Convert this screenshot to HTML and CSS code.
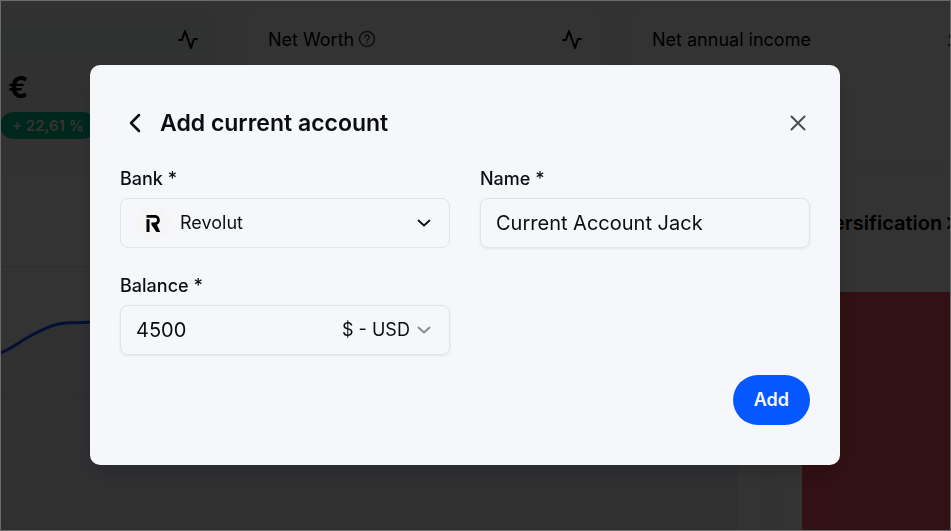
FILE: index.html
```
<!DOCTYPE html>
<html lang="en">
<head>
    <meta charset="UTF-8">
    <meta name="viewport" content="width=device-width, initial-scale=1.0">
    <title>Add current account</title>
    <link rel="stylesheet" href="styles.css">
</head>
<body>
    <!-- Dashboard behind the modal -->
    <main class="dashboard" aria-hidden="true">
        <section class="summary-row">
            <div class="card card-active">
                <div class="card-head">
                    <span class="card-title"></span>
                    <svg class="icon" viewBox="0 0 20 20"><path d="M1 11h3l3-9 6 17 3-9h3"/></svg>
                </div>
                <div class="amount">€</div>
                <span class="badge">+ 22,61 %</span>
            </div>
            <div class="card">
                <div class="card-head">
                    <span class="card-title">Net Worth
                        <svg class="icon-help" viewBox="0 0 18 18"><circle cx="9" cy="9" r="7.5"/><path d="M6.8 7.2a2.2 2.2 0 1 1 3.3 1.9c-.8.4-1.1.8-1.1 1.4M9 12.4v.6"/></svg>
                    </span>
                    <svg class="icon" viewBox="0 0 20 20"><path d="M1 11h3l3-9 6 17 3-9h3"/></svg>
                </div>
            </div>
            <div class="card">
                <div class="card-head">
                    <span class="card-title">Net annual income</span>
                    <svg class="icon" viewBox="0 0 20 20"><path d="M10 1v18M15 5H7a3 3 0 0 0-3 3 3 3 0 0 0 3 2h6a3 3 0 0 1 0 6H3"/></svg>
                </div>
            </div>
        </section>

        <section class="detail-row">
            <div class="card chart-card">
                <svg class="chart" viewBox="0 0 738 354" preserveAspectRatio="none">
                    <path class="grid-line" d="M0 89.5H738M0 217.5H738M0 344.5H738"/>
                    <path class="area" d="M0 176C12 172 20 164 32 158C45 152 52 147 65 146C75 145 80 146 92 145C300 138 500 110 738 90V354H0Z"/>
                    <path class="line" d="M0 176C12 172 20 164 32 158C45 152 52 147 65 146C75 145 80 146 92 145C300 138 500 110 738 90"/>
                </svg>
            </div>
            <div class="card diversification">
                <h2>Diversification
                    <svg class="icon-next" viewBox="0 0 12 16"><path d="M2 3l5 5-5 5"/></svg>
                </h2>
                <div class="block"></div>
            </div>
        </section>
    </main>

    <!-- Modal -->
    <div class="overlay">
        <form class="modal" role="dialog" aria-labelledby="modal-title">
            <div class="modal-head">
                <button type="button" class="back" aria-label="Back">
                    <svg viewBox="0 0 20 20"><path d="M14 2L6 10l8 8"/></svg>
                </button>
                <h1 id="modal-title">Add current account</h1>
                <button type="button" class="close" aria-label="Close">
                    <svg viewBox="0 0 16 16"><path d="M1.5 1.5l13 13M14.5 1.5l-13 13"/></svg>
                </button>
            </div>

            <div class="fields">
                <div class="field">
                    <label for="bank">Bank *</label>
                    <div class="control">
                        <svg class="bank-logo" viewBox="0 0 34 34">
                            <circle cx="17" cy="17" r="17" fill="#f5f5f5"/>
                            <path d="M10.5 13.2h3V26h-3z"/>
                            <path d="M10.5 9h8.2a5.1 5.1 0 0 1 2.2 9.7L24.2 26h-3.8l-5-7.2v-2.3h3.3a2.4 2.4 0 0 0 0-4.8h-8.2z"/>
                        </svg>
                        <select id="bank" class="bank-select">
                            <option>Revolut</option>
                        </select>
                        <svg class="chevron" viewBox="0 0 24 24"><path d="M6.5 9.5L12 14.5l5.5-5"/></svg>
                    </div>
                </div>

                <div class="field">
                    <label for="name">Name *</label>
                    <div class="control raised">
                        <input type="text" id="name" value="Current Account Jack">
                    </div>
                </div>

                <div class="field">
                    <label for="balance">Balance *</label>
                    <div class="control raised">
                        <input type="text" id="balance" inputmode="decimal" value="4500">
                        <select class="currency-select" aria-label="Currency">
                            <option>$ - USD</option>
                        </select>
                        <svg class="chevron chevron-light" viewBox="0 0 24 24"><path d="M6.5 9.5L12 14.5l5.5-5"/></svg>
                    </div>
                </div>
            </div>

            <div class="actions">
                <button type="submit" class="add">Add</button>
            </div>
        </form>
    </div>
</body>
</html>
```
FILE: styles.css
```
* {
    box-sizing: border-box;
}

body {
    margin: 0;
    height: 100vh;
    overflow: hidden;
    font-family: Inter, sans-serif;
    font-size: 18px;
    color: #0b0d12;
    background: #f8f8f8;
}

h1, h2 {
    margin: 0;
    font-weight: 600;
}

svg {
    display: block;
    flex: none;
    fill: none;
    stroke: currentColor;
    stroke-width: 2;
    stroke-linecap: round;
    stroke-linejoin: round;
}

button, input, select {
    font: inherit;
    color: inherit;
    border: none;
    background: none;
    padding: 0;
    margin: 0;
}

button, select {
    cursor: pointer;
}

/* Dashboard */
.dashboard {
    height: 100%;
    display: flex;
    flex-direction: column;
    gap: 24px;
    padding-top: 7px;
    overflow: hidden;
    color: #000;
}

/* Last card runs past the right edge */
.summary-row {
    display: grid;
    grid-template-columns: 218fr 354fr 354fr;
    gap: 30px;
    height: 146px;
    flex: none;
    margin-right: -35px;
}

.card {
    background: #fff;
    border-radius: 20px;
    padding: 20px;
    min-width: 0;
}

.card-active {
    background: linear-gradient(#eef1f6, #f8f8f8);
    border-radius: 0 20px 20px 0;
    padding-left: 0;
}

.card-head {
    display: flex;
    justify-content: space-between;
    align-items: center;
    height: 24px;
}

.card-title {
    display: flex;
    align-items: center;
    gap: 4px;
    white-space: nowrap;
}

.icon {
    width: 20px;
    height: 20px;
}

.icon-help {
    width: 18px;
    height: 18px;
    color: #444;
    stroke-width: 1.5;
}

.amount {
    padding-left: 8px;
    margin-top: 16px;
    font-size: 30px;
    line-height: 40px;
    font-weight: 700;
}

.badge {
    display: inline-block;
    margin-top: 5px;
    padding: 0 12px;
    border-radius: 14px;
    background: #00c48c;
    color: #fff;
    font-size: 15px;
    line-height: 27px;
    font-weight: 600;
    white-space: nowrap;
}

.detail-row {
    display: grid;
    grid-template-columns: 760fr 206fr;
    gap: 20px;
    flex: 1;
    min-height: 0;
    margin-right: -35px;
}

.chart-card {
    border-radius: 0;
    padding: 0 22px 0 0;
}

.chart {
    width: 100%;
    height: 100%;
}

.grid-line {
    stroke: #e4e4e4;
    stroke-width: 1;
}

.area {
    fill: #dde2ee;
    fill-opacity: 0.5;
    stroke: none;
}

.line {
    stroke: #0554ff;
    stroke-width: 3;
}

.diversification {
    display: flex;
    flex-direction: column;
    padding: 32px 0 0 22px;
    border-radius: 0;
}

.diversification h2 {
    display: flex;
    align-items: center;
    gap: 4px;
    font-size: 20px;
    line-height: 28px;
    white-space: nowrap;
}

.icon-next {
    width: 12px;
    height: 16px;
}

.block {
    flex: 1;
    margin-top: 55px;
    background: #f45560;
}

/* Modal */
.overlay {
    position: fixed;
    inset: 0;
    display: flex;
    align-items: center;
    padding: 0 110px 2px 89px;
    background: rgba(0, 0, 0, 0.8);
    border: 1px solid #6b6b6b;
}

.modal {
    flex: 1;
    padding: 40px 30px;
    border-radius: 10px;
    background: #f5f7fb;
    box-shadow: 0 8px 20px rgba(0, 0, 0, 0.15);
}

.modal-head {
    display: flex;
    align-items: center;
    gap: 10px;
    height: 36px;
    margin-bottom: 27px;
}

.modal-head h1 {
    flex: 1;
    font-size: 23px;
    line-height: 36px;
}

.back, .close {
    display: flex;
    align-items: center;
    justify-content: center;
    height: 30px;
}

.back {
    width: 30px;
}

.back svg {
    width: 20px;
    height: 20px;
    stroke-width: 2.5;
}

.close {
    width: 25px;
    color: #4b4d52;
}

.close svg {
    width: 16px;
    height: 16px;
}

.fields {
    display: grid;
    grid-template-columns: 1fr 1fr;
    gap: 27px 30px;
}

.field {
    display: flex;
    flex-direction: column;
    gap: 8px;
    min-width: 0;
}

.field label {
    line-height: 22px;
    font-weight: 500;
}

.control {
    display: flex;
    align-items: center;
    height: 50px;
    padding: 0 13px 0 15px;
    border: 1px solid #e2e3e8;
    border-radius: 8px;
}

.raised {
    box-shadow: 0 1px 3px rgba(0, 0, 0, 0.08);
}

.control input {
    flex: 1;
    min-width: 0;
    font-size: 20px;
    outline: none;
}

.control select {
    appearance: none;
    outline: none;
}

.bank-logo {
    width: 34px;
    height: 34px;
    margin-right: 10px;
    fill: #000;
    stroke: none;
}

.bank-select {
    flex: 1;
    min-width: 0;
}

.chevron {
    width: 24px;
    height: 24px;
    stroke-width: 1.75;
    pointer-events: none;
}

.chevron-light {
    color: #85878c;
    margin-left: 2px;
}

.actions {
    display: flex;
    justify-content: flex-end;
    margin-top: 20px;
}

.add {
    height: 50px;
    padding: 0 21px;
    border-radius: 25px;
    background: #0557ff;
    color: #f6f8fc;
    font-weight: 600;
}
```
